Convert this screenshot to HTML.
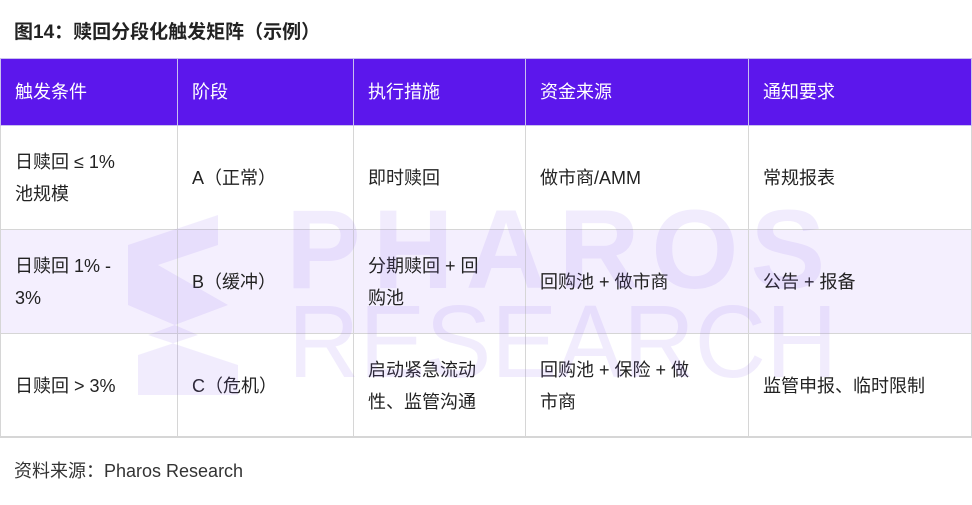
<!DOCTYPE html>
<html><head><meta charset="utf-8"><style>
body{margin:0;width:972px;height:504px;background:#fff;position:relative;overflow:hidden;font-family:"Liberation Sans","Noto Sans CJK SC",sans-serif;color:#222}
.t{position:absolute;left:14px;top:17px;font-size:19px;font-weight:bold;color:#222}
table{position:absolute;left:0;top:58px;border-collapse:collapse;width:972px;table-layout:fixed}
td,th{border:1px solid #d6d6d6;font-size:18px;text-align:left;padding:0 0 0 14px;vertical-align:middle;line-height:32px;font-weight:normal}
th{background:#5c17ec;color:#fff;height:66px;border-color:#c9c0ee}
tr.r td{height:103px}
tr.s td{background:#f4effe}
.f{position:absolute;left:14px;top:457px;font-size:18px;color:#333}
.wm{position:absolute;color:rgba(140,100,235,0.12);font-family:"Liberation Sans",sans-serif;pointer-events:none;z-index:2;white-space:nowrap}
.ft{position:absolute;left:0;top:436px;width:972px;height:68px;border-top:1px solid #d6d6d6}
</style></head><body>
<div class="t">图14：赎回分段化触发矩阵（示例）</div>
<table>
<colgroup><col style="width:177px"><col style="width:176px"><col style="width:172px"><col style="width:223px"><col></colgroup>
<tr><th>触发条件</th><th>阶段</th><th>执行措施</th><th>资金来源</th><th>通知要求</th></tr>
<tr class="r"><td>日赎回 ≤ 1%<br>池规模</td><td>A（正常）</td><td>即时赎回</td><td>做市商/AMM</td><td>常规报表</td></tr>
<tr class="r s"><td>日赎回 1% -<br>3%</td><td>B（缓冲）</td><td>分期赎回 + 回<br>购池</td><td>回购池 + 做市商</td><td>公告 + 报备</td></tr>
<tr class="r"><td>日赎回 &gt; 3%</td><td>C（危机）</td><td>启动紧急流动<br>性、监管沟通</td><td>回购池 + 保险 + 做<br>市商</td><td>监管申报、临时限制</td></tr>
</table>
<div class="ft"></div>
<div class="f">资料来源：Pharos Research</div>
<div class="wm" style="left:286px;top:194px;font-size:112px;font-weight:bold;letter-spacing:12px;line-height:112px">PHAROS</div>
<div class="wm" style="left:288px;top:290px;font-size:103px;line-height:103px;transform:scaleX(0.96);transform-origin:left top">RESEARCH</div>
<svg class="wm" style="left:118px;top:205px" width="150" height="190" viewBox="0 0 150 190"><path d="M10 40 L100 10 L100 40 L40 60 L110 100 L30 130 L120 160 L120 190 L20 190 L20 150 L80 130 L10 100 Z" fill="rgba(140,100,235,0.12)"/></svg>
</body></html>
